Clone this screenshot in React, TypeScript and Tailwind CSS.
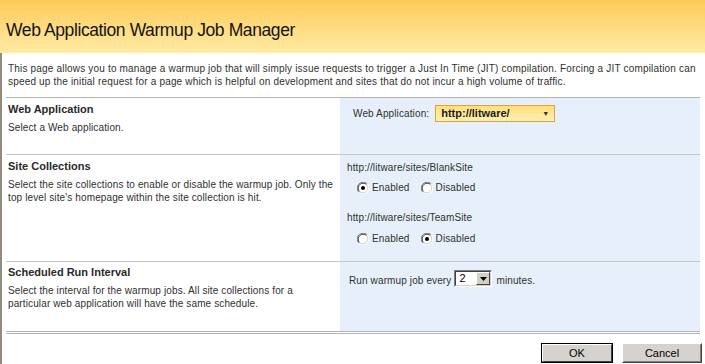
import React from 'react';

function Radio({ checked }: { checked?: boolean }) {
  return (
    <svg width="12" height="12" viewBox="0 0 12 12" className="shrink-0">
      <circle cx="6" cy="6" r="5" fill="#fff" />
      <path d="M1.76 10.24A6 6 0 0 1 10.24 1.76" fill="none" stroke="#808080" strokeWidth="1" />
      <path d="M10.24 1.76A6 6 0 0 1 1.76 10.24" fill="none" stroke="#ffffff" strokeWidth="1" />
      <path d="M2.47 9.53A5 5 0 0 1 9.53 2.47" fill="none" stroke="#404040" strokeWidth="1" />
      <path d="M9.53 2.47A5 5 0 0 1 2.47 9.53" fill="none" stroke="#d4d0c8" strokeWidth="1" />
      {checked && <circle cx="6" cy="6" r="2" fill="#000" />}
    </svg>
  );
}

function RadioPair({ enabled }: { enabled: boolean }) {
  return (
    <div className="flex items-center h-[13px] pl-[17px]">
      <Radio checked={enabled} />
      <span className="ml-[3px]">Enabled</span>
      <span className="ml-[11px]"><Radio checked={!enabled} /></span>
      <span className="ml-[3px]">Disabled</span>
    </div>
  );
}

function Heading({ children }: { children: React.ReactNode }) {
  return <div className="text-[11px] leading-[13px] font-bold tracking-normal text-[#2a2a2a]">{children}</div>;
}

export default function App() {
  return (
    <div className="w-[705px] h-[364px] bg-white overflow-hidden font-['Liberation_Sans',Arial,sans-serif] text-[#303030]">
      <div className="h-[53px] bg-gradient-to-b from-[#fdca55] to-[#ffeba4] pl-[6px] pt-[20px]">
        <h1 className="text-[17.5px] leading-[20px] tracking-[-0.4px] text-[#141414]">Web Application Warmup Job Manager</h1>
      </div>

      <div className="border-l-2 border-[#948b7e] h-[311px]">
        <div className="h-[44px] pl-[6px] pt-[9px] text-[10px] leading-[13px] tracking-[0.18px]">
          This page allows you to manage a warmup job that will simply issue requests to trigger a Just In Time (JIT) compilation. Forcing a JIT compilation can speed up the initial request for a page which is helpful on development and sites that do not incur a high volume of traffic.
        </div>

        <div className="ml-[4px] mr-[5px] border-t border-[#b4b4b4] text-[10px] leading-[13px] tracking-[0.12px]">
          <div className="flex h-[57px] border-b border-[#c6c6c6]">
            <div className="w-[334px] pl-[2px] pt-[5px]">
              <Heading>Web Application</Heading>
              <div className="mt-[5px]">Select a Web application.</div>
            </div>
            <div className="flex-1 bg-[#e7f0fa] pl-[13px] pt-[7px]">
              <div className="flex items-center h-[17px]">
                <span>Web Application:</span>
                <div className="ml-[6px] w-[120px] h-[17px] border border-[#e3a23e] bg-gradient-to-b from-[#ffdf78] to-[#fff0b4] flex items-center pl-[5px] pr-[5px]">
                  <span className="flex-1 text-[11px] font-bold tracking-normal text-[#1c1c1c]">http://litware/</span>
                  <span className="text-[7px] leading-none text-[#333]">▼</span>
                </div>
              </div>
            </div>
          </div>

          <div className="flex h-[107px] border-b border-[#c6c6c6]">
            <div className="w-[334px] pl-[2px] pt-[5px]">
              <Heading>Site Collections</Heading>
              <div className="mt-[5px] w-[328px]">Select the site collections to enable or disable the warmup job. Only the top level site's homepage within the site collection is hit.</div>
            </div>
            <div className="flex-1 bg-[#e7f0fa] pl-[7px] pt-[6px]">
              <div>http://litware/sites/BlankSite</div>
              <div className="mt-[7px] -ml-[7px]"><RadioPair enabled /></div>
              <div className="mt-[17px]">http://litware/sites/TeamSite</div>
              <div className="mt-[8px] -ml-[7px]"><RadioPair enabled={false} /></div>
            </div>
          </div>

          <div className="flex h-[72px] border-b-[3px] border-double border-[#b4b4b4]">
            <div className="w-[334px] pl-[2px] pt-[4px]">
              <Heading>Scheduled Run Interval</Heading>
              <div className="mt-[5px] w-[300px]">Select the interval for the warmup jobs. All site collections for a particular web application will have the same schedule.</div>
            </div>
            <div className="flex-1 bg-[#e7f0fa] pl-[9px] pt-[8px]">
              <div className="flex items-center h-[17px]">
                <span className="pt-[3px]">Run warmup job every</span>
                <div className="ml-[3px] w-[38px] h-[17px] border border-t-[#808080] border-l-[#808080] border-b-white border-r-white">
                  <div className="h-full flex items-center bg-white border border-t-[#404040] border-l-[#404040] border-b-[#d4d0c8] border-r-[#d4d0c8]">
                    <span className="flex-1 pl-[3px] text-[11px] text-black">2</span>
                    <div className="w-[14px] h-[13px] bg-[#d4d0c8] border border-t-white border-l-white border-b-[#404040] border-r-[#404040] flex items-center justify-center">
                      <svg width="7" height="4" viewBox="0 0 7 4"><path d="M0 0h7L3.5 4z" fill="#000" /></svg>
                    </div>
                  </div>
                </div>
                <span className="ml-[4px] pt-[3px]">minutes.</span>
              </div>
            </div>
          </div>
        </div>

        <div className="flex justify-end gap-[9px] pr-[3px] pt-[9px]">
          <button className="w-[72px] h-[20px] border border-black bg-[#d6d3ce]">
            <div className="h-full flex items-center justify-center border border-t-white border-l-white border-b-[#404040] border-r-[#404040] text-[11px] text-black">OK</div>
          </button>
          <button className="w-[80px] h-[20px] bg-[#d6d3ce] border border-t-white border-l-white border-b-[#404040] border-r-[#404040]">
            <div className="h-full flex items-center justify-center border border-transparent border-b-[#808080] border-r-[#808080] text-[11px] text-black">Cancel</div>
          </button>
        </div>
      </div>
    </div>
  );
}
